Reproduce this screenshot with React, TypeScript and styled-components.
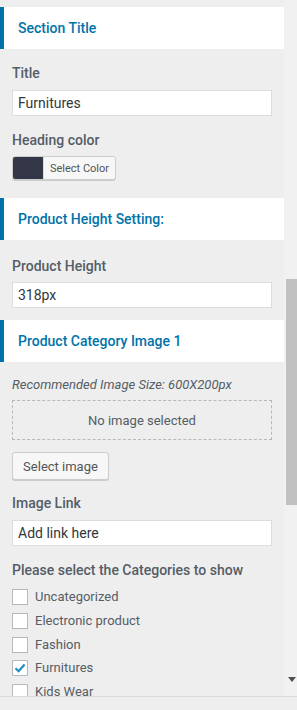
import React from "react";
import styled, { createGlobalStyle } from "styled-components";

const Global = createGlobalStyle`
  html, body { margin: 0; padding: 0; background: #eeeeee; }
  body { font-family: Roboto, "Liberation Sans", sans-serif; }
  * { box-sizing: border-box; }
`;

const Frame = styled.div`
  width: 297px;
  height: 710px;
  display: flex;
  flex-direction: column;
  overflow: hidden;
`;

const Viewport = styled.div`
  height: 696px;
  flex: none;
  display: flex;
  flex-direction: row;
  overflow: hidden;
`;

const Panel = styled.div`
  width: 284px;
  flex: none;
  background: #eeeeee;
  padding-top: 7px;
  display: flex;
  flex-direction: column;
  overflow: hidden;
`;

const Track = styled.div`
  width: 13px;
  flex: none;
  background: #f1f1f1;
  display: flex;
  flex-direction: column;
  align-items: stretch;
`;

const Thumb = styled.div`
  margin-top: 279px;
  margin-left: 2px;
  height: 226px;
  background: #c1c1c1;
`;

const ArrowWrap = styled.div`
  margin-top: auto;
  height: 19px;
  display: flex;
  justify-content: center;
  padding-left: 2px;
`;

const Footer = styled.div`
  height: 14px;
  border-top: 1px solid #dcdcdc;
  background: #eeeeee;
`;

const SectionHeader = styled.div<{ $mt?: number }>`
  height: 42px;
  flex: none;
  margin-top: ${(p) => p.$mt ?? 0}px;
  background: #ffffff;
  border-left: 4px solid #0073aa;
  display: flex;
  align-items: center;
  padding-left: 14px;
  font-size: 14px;
  font-weight: 500;
  color: #0073aa;
  line-height: 20px;
`;

const Body = styled.div<{ $pt?: number }>`
  padding: ${(p) => p.$pt ?? 14}px 12px 0 12px;
  display: flex;
  flex-direction: column;
`;

const Label = styled.div<{ $mt?: number }>`
  font-size: 14px;
  font-weight: 500;
  line-height: 20px;
  color: #555d66;
  margin-top: ${(p) => p.$mt ?? 0}px;
`;

const TextInput = styled.div<{ $mt?: number }>`
  margin-top: ${(p) => p.$mt ?? 7}px;
  width: 260px;
  height: 26px;
  flex: none;
  background: #ffffff;
  border: 1px solid #dddddd;
  font-size: 14px;
  color: #32373c;
  padding-left: 5px;
  display: flex;
  align-items: center;
`;

const ColorButton = styled.div`
  margin-top: 6px;
  width: 104px;
  height: 24px;
  flex: none;
  display: flex;
  border: 1px solid #cccccc;
  border-radius: 3px;
  background: #f7f7f7;
  overflow: hidden;
  box-shadow: 0 1px 0 #cccccc;
`;

const Swatch = styled.div`
  width: 30px;
  background: #333647;
`;

const ColorText = styled.div`
  flex: 1;
  display: flex;
  align-items: center;
  justify-content: center;
  font-size: 11px;
  color: #555555;
  border-left: 1px solid #dddddd;
`;

const Note = styled.div`
  font-size: 13px;
  font-style: italic;
  color: #555d66;
  line-height: 18px;
  margin-top: 14px;
`;

const Placeholder = styled.div`
  margin-top: 6px;
  width: 260px;
  height: 40px;
  flex: none;
  border: 1px dashed #b4b9be;
  display: flex;
  align-items: center;
  justify-content: center;
  font-size: 13px;
  color: #555d66;
`;

const Button = styled.div`
  margin-top: 12px;
  width: 97px;
  height: 28px;
  flex: none;
  border: 1px solid #cccccc;
  border-radius: 3px;
  background: #f7f7f7;
  box-shadow: 0 1px 0 #cccccc;
  display: flex;
  align-items: center;
  justify-content: center;
  font-size: 13px;
  color: #555555;
`;

const CheckList = styled.div`
  margin-top: 9px;
  display: flex;
  flex-direction: column;
  gap: 7.75px;
`;

const CheckRow = styled.div`
  display: flex;
  align-items: center;
  height: 16px;
  flex: none;
  gap: 7px;
`;

const Box = styled.div`
  width: 16px;
  height: 16px;
  border: 1px solid #b4b9be;
  background: #ffffff;
  display: flex;
  align-items: center;
  justify-content: center;
  flex: none;
`;

const CheckText = styled.span`
  font-size: 13px;
  color: #555d66;
  line-height: 16px;
`;

const categories = [
  { name: "Uncategorized", checked: false },
  { name: "Electronic product", checked: false },
  { name: "Fashion", checked: false },
  { name: "Furnitures", checked: true },
  { name: "Kids Wear", checked: false },
];

export default function App() {
  return (
    <>
      <Global />
      <Frame>
        <Viewport>
          <Panel>
            <SectionHeader>Section Title</SectionHeader>
            <Body>
              <Label>Title</Label>
              <TextInput>Furnitures</TextInput>
              <Label $mt={14}>Heading color</Label>
              <ColorButton>
                <Swatch />
                <ColorText>Select Color</ColorText>
              </ColorButton>
            </Body>
            <SectionHeader $mt={18}>Product Height Setting:</SectionHeader>
            <Body $pt={16}>
              <Label>Product Height</Label>
              <TextInput $mt={6}>318px</TextInput>
            </Body>
            <SectionHeader $mt={12}>Product Category Image 1</SectionHeader>
            <Body $pt={0}>
              <Note>Recommended Image Size: 600X200px</Note>
              <Placeholder>No image selected</Placeholder>
              <Button>Select image</Button>
              <Label $mt={13}>Image Link</Label>
              <TextInput>Add link here</TextInput>
              <Label $mt={14}>Please select the Categories to show</Label>
              <CheckList>
                {categories.map((c) => (
                  <CheckRow key={c.name}>
                    <Box>
                      {c.checked && (
                        <svg width="14" height="14" viewBox="0 0 14 14">
                          <path
                            d="M2.5 7.2 L5.6 10.2 L11.6 3.4"
                            fill="none"
                            stroke="#1e8cbe"
                            strokeWidth="2.2"
                          />
                        </svg>
                      )}
                    </Box>
                    <CheckText>{c.name}</CheckText>
                  </CheckRow>
                ))}
              </CheckList>
            </Body>
          </Panel>
          <Track>
            <Thumb />
            <ArrowWrap>
              <svg width="8" height="5" viewBox="0 0 8 5">
                <path d="M0 0 L8 0 L4 5 Z" fill="#505050" />
              </svg>
            </ArrowWrap>
          </Track>
        </Viewport>
        <Footer />
      </Frame>
    </>
  );
}
